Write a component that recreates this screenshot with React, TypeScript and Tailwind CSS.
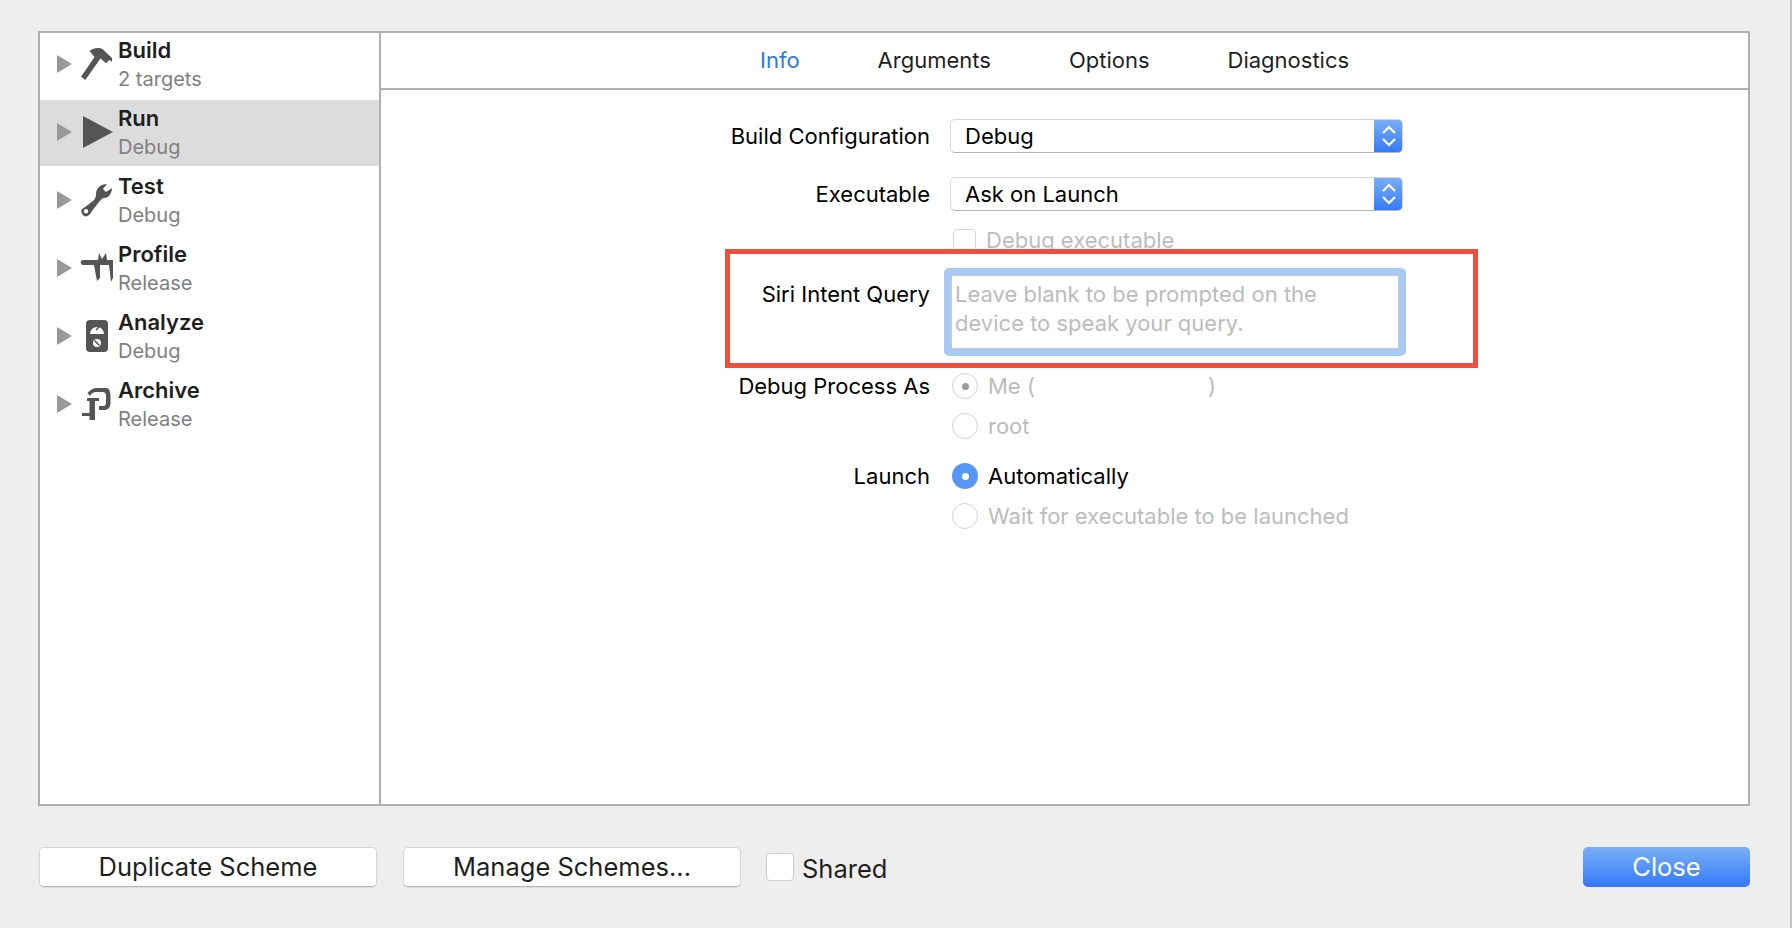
import React from 'react';

const font = { fontFamily: 'Inter, "Liberation Sans", sans-serif' };

const HammerIcon = () => (
  <svg width="34" height="34" viewBox="0 0 34 34" className="text-[#555555]" fill="currentColor">
    <path d="M1 29.7 L14.5 10 L9.5 4 C13 1 19 0 23 2.5 L32 11 V14.7 L29.3 13 L26 16.3 L20.5 11.5 L5.3 33 Z" />
  </svg>
);

const PlayIcon = () => (
  <svg width="34" height="34" viewBox="0 0 34 34" className="text-[#555555]" fill="currentColor">
    <path d="M3 1 L33 17 L3 33 Z" />
  </svg>
);

const WrenchIcon = () => (
  <svg width="34" height="34" viewBox="0 0 34 34" className="text-[#555555]" fill="currentColor">
    <path fillRule="evenodd" d="M32 5 C32 10 29 15 24 15 C22 15 21 17 19 19 L12 28 C10 33 5 35 3 32 C0 29 1 26 5 24 L13 18 C15 16 16 14 16 11 C16 5 21 1 27 1 L23 6 L26 9 Z M6 26 A2.2 2.2 0 1 0 6.01 30.4 A2.2 2.2 0 1 0 6 26 Z" />
  </svg>
);

const CaliperIcon = () => (
  <svg width="34" height="30" viewBox="0 0 34 30" className="text-[#555555]" fill="currentColor">
    <path d="M3 7 H18 L19 0 L22 6 L26 0 L27 7 H33 V25 L31 29 L29 12 H20 V25 L17 28 L14 12 H3 C0 12 0 7 3 7 Z" />
  </svg>
);

const MeterIcon = () => (
  <svg width="22" height="32" viewBox="0 0 22 32">
    <rect width="22" height="32" rx="4" fill="#555555" />
    <path d="M4 14 A7 7 0 0 1 18 14 Z" fill="#ffffff" />
    <path d="M10 10 L13 7" stroke="#555555" strokeWidth="1.6" />
    <circle cx="11" cy="23" r="4" fill="#ffffff" />
    <path d="M8.5 20.5 L13.5 25.5" stroke="#555555" strokeWidth="1.6" />
  </svg>
);

const ClampIcon = () => (
  <svg width="30" height="33" viewBox="0 0 30 33" className="text-[#555555]" fill="currentColor">
    <path d="M5.5 5 C8 2 11 0 15 0 H24 C28 0 28.5 5 28.5 8 V14 C28.5 20 26 22 22 22 H17 V18 H21 C24 18 24 16 24 13 V8 C24 5 23 4 20 4 H14 C11 4 10 5 8 8 Z" />
    <rect x="5" y="10" width="12" height="3" />
    <rect x="7.5" y="13" width="5.5" height="19" />
    <rect x="0" y="25" width="13" height="3" />
  </svg>
);

const schemes = [
  { name: 'Build', sub: '2 targets', icon: <HammerIcon /> },
  { name: 'Run', sub: 'Debug', icon: <PlayIcon />, selected: true },
  { name: 'Test', sub: 'Debug', icon: <WrenchIcon /> },
  { name: 'Profile', sub: 'Release', icon: <CaliperIcon /> },
  { name: 'Analyze', sub: 'Debug', icon: <MeterIcon /> },
  { name: 'Archive', sub: 'Release', icon: <ClampIcon /> },
];

const Sidebar = () => (
  <div className="w-[341px] shrink-0 border-r-2 border-[#b0b0b0] -mt-px flex flex-col gap-[2px]">
    {schemes.map((s) => (
      <div key={s.name} className={`h-[66px] flex items-center pb-[2px] ${s.selected ? 'bg-[#dcdcdc]' : ''}`}>
        <svg width="15" height="18" viewBox="0 0 15 18" className="ml-[17px] shrink-0">
          <path d="M0 0 L15 9 L0 18 Z" fill="#999999" />
        </svg>
        <div className="w-[34px] h-[34px] ml-[8px] flex items-center justify-center shrink-0">{s.icon}</div>
        <div className="ml-[4px] flex flex-col">
          <span className="text-[22px] leading-[28px] font-semibold text-[#1f1f1f]">{s.name}</span>
          <span className="text-[20px] leading-[26px] mt-[2px] text-[#808080]">{s.sub}</span>
        </div>
      </div>
    ))}
  </div>
);

const Row = ({ label, children, className = '', labelClass = '' }: { label?: string; children: React.ReactNode; className?: string; labelClass?: string }) => (
  <div className={`grid grid-cols-[549px_1fr] gap-x-5 items-center ${className}`}>
    <div className={`text-[22px] text-right text-black leading-[26px] ${labelClass}`}>{label}</div>
    {children}
  </div>
);

const Select = ({ value }: { value: string }) => (
  <div className="w-[453px] h-[34px] flex rounded-[5px] bg-white border border-[#d6d6d6] border-b-[#b5b5b5] overflow-hidden">
    <div className="flex-1 pl-[14px] text-[22px] leading-[32px] text-black">{value}</div>
    <div className="w-[29px] -my-px -mr-px bg-gradient-to-b from-[#7aaef5] to-[#3478f9] flex items-center justify-center">
      <svg width="16" height="26" viewBox="0 0 16 26" fill="none" stroke="#ffffff" strokeWidth="2.2">
        <path d="M2 10 L8 4 L14 10" />
        <path d="M2 16 L8 22 L14 16" />
      </svg>
    </div>
  </div>
);

const Radio = ({ label, on, disabled }: { label: string; on?: boolean; disabled?: boolean }) => (
  <div className="flex items-center">
    <div
      className={`w-[26px] h-[26px] ml-[2px] rounded-full flex items-center justify-center ${
        on && !disabled ? 'bg-[#5596f6]' : 'bg-white border border-[#d4d4d4]'
      }`}
    >
      {on && <div className={`w-[7px] h-[7px] rounded-full ${disabled ? 'bg-[#9b9b9b]' : 'bg-white'}`} />}
    </div>
    <span className={`ml-[10px] text-[22px] leading-[26px] ${disabled ? 'text-[#bcbcbc]' : 'text-black'}`}>{label}</span>
  </div>
);

const Form = () => (
  <div className="pt-[29px] flex flex-col">
    <Row label="Build Configuration">
      <Select value="Debug" />
    </Row>
    <Row label="Executable" className="mt-[24px]">
      <Select value="Ask on Launch" />
    </Row>
    <Row className="mt-[19px]">
      <div className="flex items-center h-[20px]">
        <div className="w-[23px] h-[22px] ml-[3px] rounded-[4px] bg-white border border-[#d4d4d4] shrink-0" />
        <span className="ml-[10px] text-[22px] text-[#bcbcbc]">Debug executable</span>
      </div>
    </Row>
    <div className="relative mt-[18px]">
      {/* red annotation drawn over the screenshot */}
      <div className="absolute left-[344px] top-[-19px] w-[753px] h-[119px] border-[5px] border-[#ee4f3f] bg-white" />
      <Row label="Siri Intent Query" className="relative items-start" labelClass="pt-[13px]">
        <div className="ml-[-6px] w-[462px] h-[88px] rounded-[5px] border-[7px] border-[#a9c9f5] bg-white">
          <div className="w-full h-full border border-[#c9c9c9] pl-[3px] pt-[4px] text-[22px] leading-[29px] text-[#bcbcbc]">
            Leave blank to be prompted on the
            <br />
            device to speak your query.
          </div>
        </div>
      </Row>
    </div>
    <Row label="Debug Process As" className="mt-[17px]">
      <div className="flex items-center">
        <Radio label="Me (" on disabled />
        <span className="ml-[173px] text-[22px] leading-[26px] text-[#bcbcbc]">)</span>
      </div>
    </Row>
    <Row className="mt-[14px]">
      <Radio label="root" disabled />
    </Row>
    <Row label="Launch" className="mt-[24px]">
      <Radio label="Automatically" on />
    </Row>
    <Row className="mt-[14px]">
      <Radio label="Wait for executable to be launched" disabled />
    </Row>
  </div>
);

const Pane = () => (
  <div className="flex-1 flex flex-col">
    <div className="h-[58px] -mt-px shrink-0 border-b-2 border-[#b0b0b0] pl-[379px] flex items-center gap-[78px] text-[22px] text-[#1f1f1f]">
      <span className="text-[#2a7ae2]">Info</span>
      <span>Arguments</span>
      <span>Options</span>
      <span>Diagnostics</span>
    </div>
    <Form />
  </div>
);

const FooterButton = ({ children }: { children: React.ReactNode }) => (
  <button className="w-[338px] h-[40px] rounded-[5px] bg-white border border-[#d6d6d6] border-b-[#b5b5b5] text-[25.5px] text-[#1f1f1f] shadow-[0_1px_1px_rgba(0,0,0,0.08)]">
    {children}
  </button>
);

export default function App() {
  return (
    <div className="w-[1792px] h-[928px] bg-[#eeeeee] border-r-2 border-[#c4c4c4] pl-[38px] pt-[31px] overflow-hidden" style={font}>
      <div className="w-[1712px] h-[775px] bg-white border-2 border-[#b0b0b0] flex">
        <Sidebar />
        <Pane />
      </div>
      <div className="w-[1712px] mt-[40px] pl-px flex items-center">
        <FooterButton>Duplicate Scheme</FooterButton>
        <div className="w-[26px]" />
        <FooterButton>Manage Schemes...</FooterButton>
        <div className="w-[28px] h-[28px] ml-[25px] rounded-[4px] bg-white border border-[#cfcfcf] shrink-0" />
        <span className="ml-[8px] mt-[4px] text-[25.5px] text-[#1f1f1f]">Shared</span>
        <button className="ml-auto w-[167px] h-[40px] rounded-[5px] bg-gradient-to-b from-[#7aaef5] to-[#3478f9] text-[25.5px] text-white">
          Close
        </button>
      </div>
    </div>
  );
}
